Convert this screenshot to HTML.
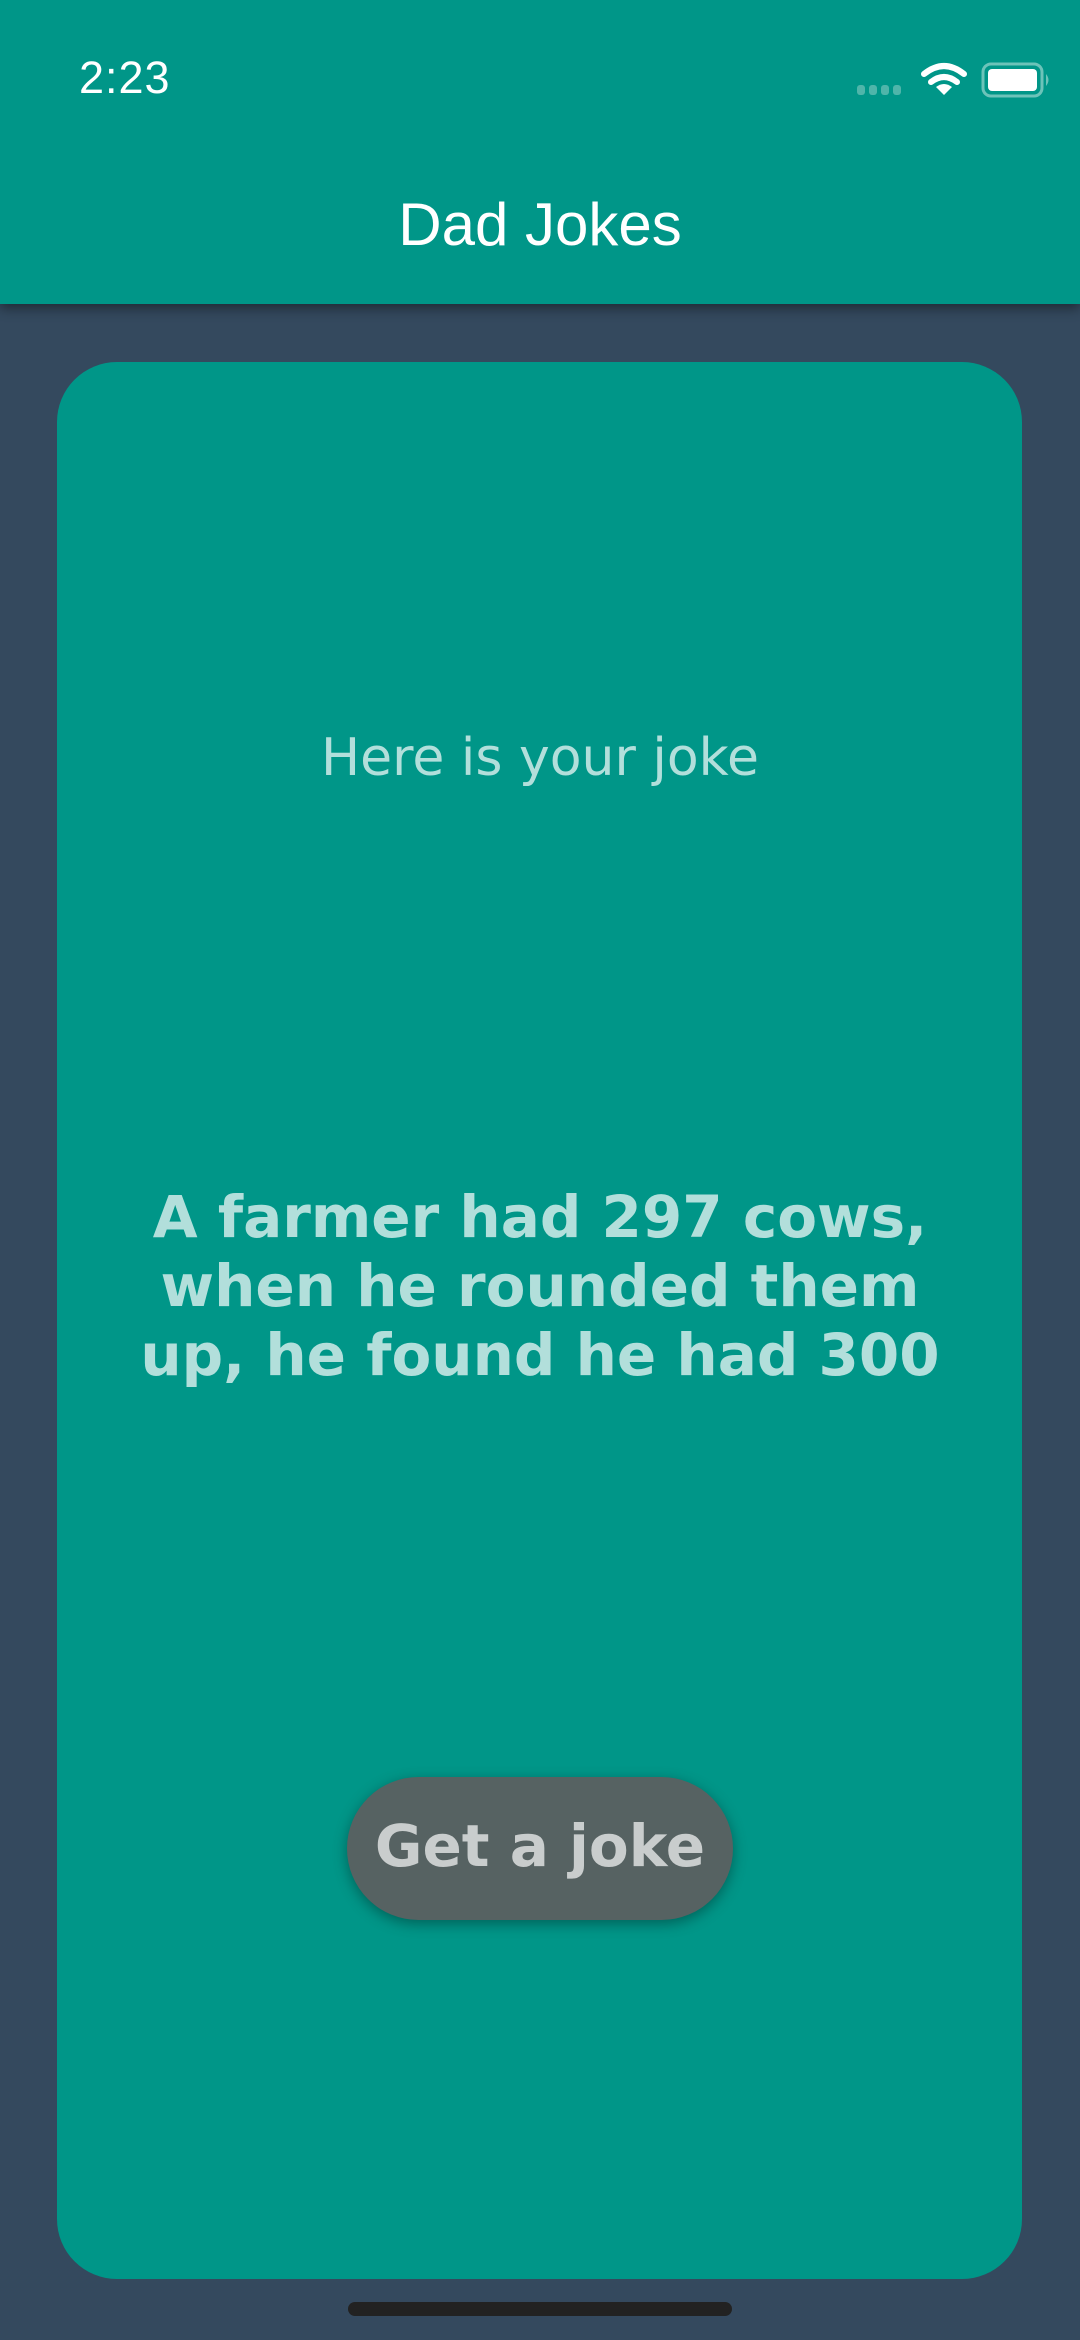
<!DOCTYPE html>
<html><head><meta charset="utf-8"><style>
html,body{margin:0;padding:0}
body{width:1080px;height:2340px;background:#34495E;position:relative;overflow:hidden;font-family:"DejaVu Sans",Verdana,sans-serif}
.hdr{position:absolute;left:0;top:0;width:1080px;height:304px;background:#009688;box-shadow:0 4px 12px rgba(0,0,0,.45)}
.time{position:absolute;left:79px;top:52px;font-family:"Liberation Sans",sans-serif;font-size:45px;color:#fff;font-weight:normal;letter-spacing:1px}
.title{position:absolute;left:0;width:1080px;top:190px;text-align:center;font-family:"Liberation Sans",sans-serif;font-size:60px;color:#fff}
.card{position:absolute;left:57px;top:362px;width:965px;height:1917px;background:#009688;border-radius:60px}
.sub{position:absolute;left:0;width:1080px;top:728px;text-align:center;font-size:52px;color:#b2dfdb}
.joke{position:absolute;left:40px;width:1000px;top:1183px;text-align:center;font-size:58px;line-height:69px;font-weight:bold;color:#b2dfdb}
.btn{position:absolute;left:347px;top:1777px;width:386px;height:143px;border-radius:72px;background:#566262;box-shadow:0 4px 14px rgba(0,0,0,.35);color:#c9cdcd;font-weight:bold;font-size:58px;text-align:center;line-height:138px}
.home{position:absolute;left:348px;top:2302px;width:384px;height:14px;border-radius:7px;background:#222}
</style></head><body>
<div class="hdr">
<div class="time">2:23</div>
<svg style="position:absolute;left:850px;top:60px" width="230" height="40" viewBox="0 0 230 40">
<g fill="#4fb5aa"><rect x="7" y="25" width="8" height="10" rx="3"/><rect x="19" y="25" width="8" height="10" rx="3"/><rect x="31" y="25" width="8" height="10" rx="3"/><rect x="43" y="25" width="8" height="10" rx="3"/></g>
<g fill="none" stroke="#fff" stroke-width="6" stroke-linecap="round"><path d="M74 14 Q94 -2 114 14"/><path d="M81 22 Q94 12 107 22"/></g>
<path d="M94 35 L86 27 Q94 21 102 27 Z" fill="#fff"/>
<rect x="133" y="4" width="59" height="32" rx="8" fill="none" stroke="#6cc3b9" stroke-width="3"/>
<rect x="138" y="9" width="49" height="22" rx="4" fill="#fff"/>
<path d="M196 14 q5 6 0 12" fill="#6cc3b9"/>
</svg>
<div class="title">Dad Jokes</div>
</div>
<div class="card"></div>
<div class="sub">Here is your joke</div>
<div class="joke">A farmer had 297 cows,<br>when he rounded them<br>up, he found he had 300</div>
<div class="btn">Get a joke</div>
<div class="home"></div>
</body></html>
